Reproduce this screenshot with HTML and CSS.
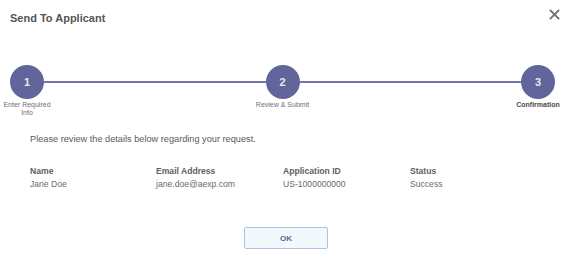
FILE: index.html
```html
<!DOCTYPE html>
<html lang="en">
<head>
    <meta charset="UTF-8">
    <title>Send To Applicant</title>
    <link rel="stylesheet" href="styles.css">
</head>
<body>
    <!-- Modal -->
    <div class="modal">
        <!-- Header -->
        <div class="modal-header">
            <h1 class="modal-title">Send To Applicant</h1>
            <span class="close-btn" aria-label="Close">
                <svg width="11" height="11" viewBox="0 0 11 11">
                    <path d="M1.5 1.5 L9.5 9.5 M9.5 1.5 L1.5 9.5" stroke="#727272" stroke-width="1.8" stroke-linecap="square" fill="none"/>
                </svg>
            </span>
        </div>

        <!-- Stepper -->
        <div class="stepper">
            <div class="step">
                <div class="step-circle">1</div>
                <div class="step-label">Enter Required<br>Info</div>
            </div>
            <div class="step-line"></div>
            <div class="step">
                <div class="step-circle">2</div>
                <div class="step-label">Review &amp; Submit</div>
            </div>
            <div class="step-line"></div>
            <div class="step">
                <div class="step-circle">3</div>
                <div class="step-label active">Confirmation</div>
            </div>
        </div>

        <!-- Details -->
        <p class="intro">Please review the details below regarding your request.</p>

        <div class="details">
            <div class="detail-label">Name</div>
            <div class="detail-label">Email Address</div>
            <div class="detail-label">Application ID</div>
            <div class="detail-label">Status</div>
            <div class="detail-value">Jane Doe</div>
            <div class="detail-value">jane.doe@aexp.com</div>
            <div class="detail-value">US-1000000000</div>
            <div class="detail-value">Success</div>
        </div>

        <!-- Footer -->
        <div class="modal-footer">
            <button class="ok-btn">OK</button>
        </div>
    </div>
</body>
</html>
```

FILE: styles.css
```css
/* Reset */
* {
    box-sizing: border-box;
    margin: 0;
    padding: 0;
}

body {
    font-family: "Liberation Sans", Arial, sans-serif;
    background-color: #ffffff;
    color: #555;
}

.modal {
    width: 565px;
    height: 258px;
    background-color: #fff;
}

/* Header */
.modal-header {
    display: flex;
    justify-content: space-between;
    align-items: center;
    height: 36px;
    padding: 0 5px 0 10px;
}

.modal-title {
    font-size: 11px;
    font-weight: bold;
    line-height: 16px;
    color: #555;
}

.close-btn {
    display: flex;
    width: 11px;
    height: 11px;
    margin-top: -8px;
}

/* Stepper */
.stepper {
    display: flex;
    padding-top: 29px;
}

.step {
    display: flex;
    flex-direction: column;
    align-items: center;
    width: 54px;
}

.step-circle {
    width: 34px;
    height: 34px;
    border-radius: 50%;
    background-color: #61659c;
    color: #e8e8f2;
    font-size: 11px;
    font-weight: bold;
    display: flex;
    align-items: center;
    justify-content: center;
}

.step-line {
    flex: 1;
    height: 2px;
    margin: 16px -10px 0;
    background-color: #7175a8;
}

.step-label {
    margin-top: 2px;
    font-size: 7px;
    line-height: 8px;
    color: #6f6f6f;
    text-align: center;
    white-space: nowrap;
}

.step-label.active {
    font-weight: bold;
    color: #4a4a4a;
}

/* Intro text */
.intro {
    margin-top: 16px;
    padding-left: 30px;
    font-size: 9.2px;
    line-height: 12px;
    color: #5a5a5a;
}

/* Detail grid */
.details {
    display: grid;
    grid-template-columns: 126px 127px 127px auto;
    row-gap: 1px;
    margin-top: 20px;
    padding-left: 30px;
    font-size: 8.6px;
    line-height: 12px;
}

.detail-label {
    font-weight: bold;
    color: #5e5e5e;
}

.detail-value {
    color: #6a6a6a;
}

/* Footer */
.modal-footer {
    display: flex;
    justify-content: center;
    margin-top: 37px;
    padding-left: 7px;
}

.ok-btn {
    width: 84px;
    height: 22px;
    border: 1px solid #a9c7e2;
    border-radius: 2px;
    background-color: #f2f8fc;
    color: #4f6f96;
    font-family: "Liberation Sans", Arial, sans-serif;
    font-size: 8px;
    font-weight: bold;
}
```
